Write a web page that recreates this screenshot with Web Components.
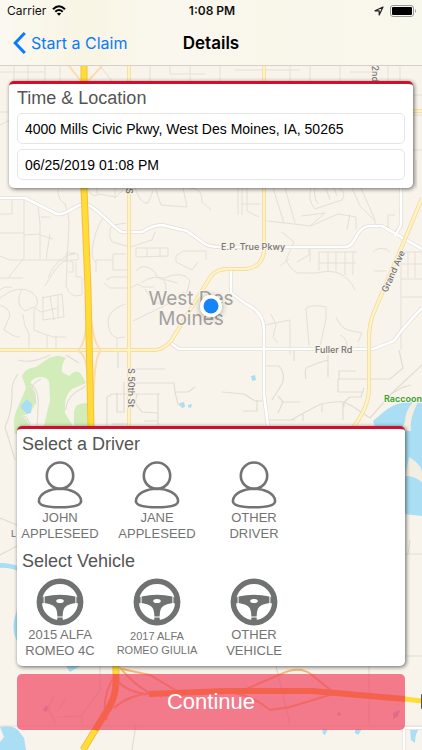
<!DOCTYPE html>
<html lang="en">
<head>
<meta charset="utf-8">
<meta name="viewport" content="width=device-width, initial-scale=1">
<title>Details</title>
<style>
    body {
        margin: 0;
        font-family: "Liberation Sans", Arial, sans-serif;
    }
</style>
</head>
<body>
<claim-details></claim-details>

<script>
class StatusBar extends HTMLElement {
    constructor() {
        super();
        this.attachShadow({ mode: 'open' });
    }

    connectedCallback() {
        this.shadowRoot.innerHTML = `
            <style>
                :host {
                    display: grid;
                    grid-template-columns: 1fr auto 1fr;
                    align-items: center;
                    height: 21px;
                    padding: 0 5px 0 7px;
                    font: 12px/20px Inter, sans-serif;
                    color: #111;
                }

                div {
                    display: flex;
                    align-items: center;
                    gap: 6px;
                }

                .right {
                    justify-content: flex-end;
                }

                strong {
                    font-weight: 600;
                }

                svg {
                    display: block;
                }
            </style>
            <div>
                <span>Carrier</span>
                <svg width="14" height="11" viewBox="0 0 14 11" fill="none" stroke="#000" stroke-width="2">
                    <path d="M1 4.2Q7-1.6 13 4.2M3.3 6.7Q7 3.2 10.7 6.7"/>
                    <path d="M7 10.8L4.8 8.6Q7 6.8 9.2 8.6z" fill="#000" stroke="none"/>
                </svg>
            </div>
            <strong>1:08 PM</strong>
            <div class="right">
                <svg width="10" height="10" viewBox="0 0 10 10" fill="none" stroke="#222" stroke-width="1.2" stroke-linejoin="round">
                    <path d="M9 1L1 4.8H5.2V9z"/>
                </svg>
                <svg width="27" height="12" viewBox="0 0 27 12">
                    <rect x=".5" y=".5" width="23" height="11" rx="2.5" fill="none" stroke="#999"/>
                    <rect x="2" y="2" width="20" height="8" rx="1" fill="#000"/>
                    <path d="M25 4Q27 6 25 8z" fill="#999"/>
                </svg>
            </div>
        `;
    }
}

class NavBar extends HTMLElement {
    constructor() {
        super();
        this.attachShadow({ mode: 'open' });
    }

    connectedCallback() {
        this.shadowRoot.innerHTML = `
            <style>
                :host {
                    display: grid;
                    grid-template-columns: 1fr auto 1fr;
                    align-items: center;
                    height: 44px;
                    padding: 0 13px;
                    border-bottom: 1px solid #d5d1ca;
                    font: 16px/22px Inter, sans-serif;
                }

                a {
                    display: flex;
                    align-items: center;
                    gap: 5px;
                    color: #0a7aff;
                    text-decoration: none;
                }

                h1 {
                    margin: 0;
                    font-size: 17px;
                    font-weight: 600;
                    color: #000;
                }
            </style>
            <a href="#start">
                <svg width="13" height="22" viewBox="0 0 13 22" fill="none" stroke="currentColor" stroke-width="3">
                    <path d="M11.8 1L2.2 11l9.6 10"/>
                </svg>
                <slot name="back"></slot>
            </a>
            <h1><slot></slot></h1>
        `;
    }
}

class AreaMap extends HTMLElement {
    constructor() {
        super();
        this.attachShadow({ mode: 'open' });
    }

    connectedCallback() {
        this.shadowRoot.innerHTML = `
            <style>
                :host {
                    display: block;
                    overflow: hidden;
                    background: #f8f4ec;
                }

                svg {
                    display: block;
                    width: 100%;
                    height: 100%;
                }

                .line {
                    fill: none;
                    stroke-linejoin: round;
                }

                .street { stroke: #e4dfd7; stroke-width: 1; }
                .path { stroke: #e2ddd3; stroke-width: 1.2; }
                .casing { stroke: #e2ddd6; stroke-width: 4; }
                .road { stroke: #fff; stroke-width: 2.6; }
                .main-casing { stroke: #f3d795; stroke-width: 4; }
                .main { stroke: #fdf3c4; stroke-width: 2.6; }
                .ramp { stroke: #fbdcae; stroke-width: 2; }
                .highway-casing { stroke: #f7bf3d; stroke-width: 7; }
                .highway { stroke: #ffdd36; stroke-width: 5; }
                .park { fill: #d2edba; }
                .water { fill: #a9def4; }

                text {
                    font-family: Inter, sans-serif;
                    font-size: 9px;
                    font-weight: 500;
                    fill: #77736f;
                    stroke: #f8f4ec;
                    stroke-width: 2;
                    paint-order: stroke;
                }

                .city {
                    font-size: 19px;
                    font-weight: 400;
                    fill: #a3a09d;
                }

                .nature {
                    fill: #3d9f2c;
                    font-weight: 600;
                }
            </style>
            <svg viewBox="0 0 422 750" preserveAspectRatio="xMidYMid slice" role="img" aria-label="Map of West Des Moines">
                <defs>
                    <filter id="shade" x="-50%" y="-50%" width="200%" height="200%">
                        <feDropShadow dx="0" dy="1" stdDeviation="3" flood-opacity=".35"/>
                    </filter>
                </defs>

                <path class="park" d="M22 376Q25 368 36 367L49 358Q60 354 65 358Q61 367 62 372L69 376Q77 368 81 374L86 383L72 389Q65 396 65 405V413L73 426L15 434Q12 420 17 409L26 388z"/>
                <path class="park" d="M76 406Q79 403 90 403V428H74V411zM52 359L57 356 66 358 62 363z"/>
                <path fill="#f8f4ec" d="M31 381Q42 373 49 381L50 400 44 426H29Q27 418 21 416Q31 415 36 402Q37 392 31 386z"/>
                <path class="water" fill="#8fd1ee" d="M21 405L27 399 32 404 31 413 27 414 21 408z"/>

                <path class="water" d="M373 421L386 410Q398 400 422 402V516L404 514z"/>
                <path fill="#f4eee2" d="M413 402Q405 411 405 422L401 430 411 431Q409 419 418 402zM409 457Q421 464 422 472V482Q413 475 405 476z"/>
                <path class="water" d="M0 563Q12 563 20 567V572Q9 567 0 568zM18 608Q9 628 18 643zM66 666H80L70 672zM0 727Q10 724 18 730L24 738 26 750H0V742L4 737z"/>
                <path class="water" d="M180 403l4-1 1 5-3 1-3-3zM188 405l4-1-1 4-3-1zM251 376l4-1 1 5-4 1zM322 729h6l-3 6-2-1zM355 729h7l-4 6-3-2zM410 729h9q-4 5-4 14l-4-3z"/>
                <path fill="#b8c4ef" d="M43 709l4-4 1 5-3 2zM337 715l2-4 2 5zM393 713l7-3-2 6-5 3z"/>

                <g class="line street">
                    <path d="M0 72H45M14 66V118L0 125M0 112H40M28 66V90M45 66V81M60 66V81M100 66L112 81M150 66V81M170 66V74H205M190 66V81M220 66V81M235 70H300M290 66V81M310 66V81M340 66V81M350 72H374M388 66V95M400 66V81M414 95H422M405 115H422M413 150H422M416 160V188"/>
                    <path d="M24 198V258L8 278M0 214H12V198M0 233H24M0 256L10 260H66L73 262V272H68M0 278H23M24 235L40 234V223L38 207M40 259V235L53 239M41 217H50M48 278Q55 258 75 253H66V262M70 254H78V260H70M45 286Q60 260 66 261M50 234L46 259M58 190Q58 200 65 204Q69 214 69 223L66 286Q70 299 82 295V277H76V262"/>
                    <path d="M0 290Q6 285 12 288M0 298Q19 283 33 293Q41 301 35 308M0 305Q9 308 10 315L4 330Q19 340 20 336M22 289Q14 304 25 311L33 307 41 312 57 308M23 314Q23 325 29 334L29 349M34 309V330Q44 335 54 337H66M42 298L62 294 64 317 43 320V296M50 296L54 320M58 295V318M47 336V349M56 336V349"/>
                    <path d="M88 188Q91 199 100 194L115 197M97 188V194M115 188V198L123 190M135 188Q141 205 148 203L153 191M156 190L161 205 187 207 183 188M190 188Q203 188 202 202L211 210M103 218Q94 231 92 252Q92 260 96 262M96 260H113V254H126M113 260V270H129M96 260V272M110 229L113 225 126 223M109 235L112 242 130 247 152 240 155 232M110 235V229M136 257V248H168V256L137 257M147 249V257M160 249V257M176 256L183 251H206V260M176 256V262L192 270 198 262"/>
                    <path d="M106 280L112 277H128M104 283L110 288H131L137 284 143 287H154M136 271Q143 262 154 271L158 278 178 283M141 283Q152 275 163 278Q170 291 162 303H154L145 289M164 278Q184 270 190 281L187 292 170 302M184 292L169 303M125 304Q109 310 108 320Q108 335 117 338L125 337M117 338V349M133 321L170 303"/>
                    <path d="M242 188V215M238 188V215M273 188L284 223M285 188L295 223M311 188Q307 199 315 209L342 200Q347 192 339 188M315 188Q313 196 318 204M326 188L330 200M334 188L337 196M361 188L375 220V228M352 188L360 206 375 221M268 221L311 226 338 214 356 217V230M301 216L309 215 325 213 310 226M350 214L347 230M247 188V211L259 217M241 204H260"/>
                    <path d="M282 232L294 242 286 260Q291 270 297 273H317Q344 266 355 290M280 266L289 259M309 248V255L297 262M319 252V271M328 252V271M336 252V271M345 252V275M353 252V275M319 263H356M319 252H357M310 247V262M373 252Q378 247 386 249L390 252M374 271H386M388 231V215H395M401 252V350M408 252V278M415 252V278M401 252H422M401 264H422M401 279H422M401 297H422"/>
                    <path d="M265 325L290 320V355M271 314L276 325 273 337 278 343M309 346L306 308Q313 304 326 307V319L320 346M336 317Q341 328 348 330L362 333 358 342M340 335Q348 338 347 350"/>
                </g>

                <g class="line path">
                    <path d="M18 360Q32 364 50 355M18 374Q11 383 12 394Q12 412 5 427L15 460M41 379Q31 383 31 393L36 404M66 410Q66 396 83 388L85 386M21 430Q21 414 26 417Q33 426 27 430M66 355L79 363M37 429L38 407Q40 392 31 384"/>
                    <path d="M118 350V368M107 426V397L112 394H130M117 393V412H124V382M112 424H128M129 369H165M131 383H174L175 392H188L195 387M175 392L178 404 182 407M133 394H160M137 394L135 403 142 412 158 413M158 394V425M144 421H158"/>
                    <path d="M265 366H279Q286 375 282 384L272 400M265 401H255L244 394 222 392M257 400V411H243M278 396L283 402 278 413M283 402H300M306 379Q304 368 308 367L318 363 328 360M328 355V377M294 361V350M267 420H295M291 420Q309 410 321 404Q337 401 344 402V407M322 404V412M303 414V421M356 371H339V379H372M338 379V392H362M364 388L361 397H350L344 402 352 406 370 418M343 403V420M370 418L392 393 422 365M372 379H390L403 368 399 350M391 394L405 386M401 388L411 385"/>
                    <path d="M406 554H422M406 656H422M0 518L17 525M100 666V690L82 715V724M0 726H422M136 724L132 750M276 666L290 724M369 666V724M53 697L48 709 56 724M65 699L59 709M82 716L57 717M410 540L408 554M0 555L17 546"/>
                </g>

                <g class="line">
                    <path class="casing" d="M0 198H25Q47 209 57 214C67 216 76 203 86 204C96 206 115 230 122 232H142Q153 225 162 225L187 231 205 244Q210 247 221 247H345C357 247 354 227 370 226H382L422 249M231 270V293L246 304Q264 312 264 330V395L268 426M169 342L179 349H373L394 341Q401 330 422 308M401 188V225L395 236M404 750V728H422"/>
                    <path class="road" d="M0 198H25Q47 209 57 214C67 216 76 203 86 204C96 206 115 230 122 232H142Q153 225 162 225L187 231 205 244Q210 247 221 247H345C357 247 354 227 370 226H382L422 249M231 270V293L246 304Q264 312 264 330V395L268 426M169 342L179 349H373L394 341Q401 330 422 308M401 188V225L395 236M404 750V728H422"/>
                    <path class="main-casing" d="M0 350H154Q163 350 171 341L211 276Q217 269 227 269H246Q263 267 264 250V66M129 66V428M422 198L405 239 374 312Q369 323 369 340V386Q370 405 353 428M388 111H422"/>
                    <path class="main" d="M0 350H154Q163 350 171 341L211 276Q217 269 227 269H246Q263 267 264 250V66M129 66V428M422 198L405 239 374 312Q369 323 369 340V386Q370 405 353 428M388 111H422"/>
                </g>

                <g class="line ramp">
                    <path d="M69 66L81 81M102 66L88 81M88 310Q86 344 78 350M90 310Q93 344 101 350M78 351Q88 354 88 389M101 351Q93 355 93 426"/>
                    <path stroke="#f8b774" d="M120 668Q140 690 153 694H182L150 675 122 669M116 680Q130 694 150 694M114 708Q130 694 150 694L225 692Q250 693 270 710L290 707 333 694M244 690L281 674Q300 665 312 675L333 692M107 720Q100 699 115 675"/>
                </g>
                <g class="line">
                    <path class="highway-casing" d="M84 66V188L88 290 91 428 116 666V681Q116 699 105 714L83 750"/>
                    <path class="highway" d="M84 66V188L88 290 91 428 116 666V681Q116 699 105 714L83 750"/>
                    <path stroke="#ffa01f" stroke-width="6" d="M149 694L225 691H312L405 699"/>
                    <path stroke="#ffa01f" stroke-width="6" d="M116 674V681Q116 699 105 714L95 730"/>
                    <path class="highway" d="M405 699L422 701"/>
                </g>
                <rect x="421" y="694" width="12" height="15" rx="1" fill="#555"/>

                <text x="221" y="250">E.P. True Pkwy</text>
                <text x="315" y="353">Fuller Rd</text>
                <text transform="translate(387 293) rotate(-66)">Grand Ave</text>
                <text transform="translate(128 368) rotate(90)">S 50th St</text>
                <text transform="translate(372 60) rotate(90)">22nd</text>
                <text transform="translate(126 188) rotate(90)">S</text>
                <text x="11" y="537">L</text>
                <text class="nature" x="384" y="402">Raccoon</text>
                <text class="city" x="191" y="305" text-anchor="middle">West Des</text>
                <text class="city" x="191" y="325" text-anchor="middle">Moines</text>
                <circle cx="211" cy="306" r="11" fill="#fff" filter="url(#shade)"/>
                <circle cx="211" cy="306" r="7.5" fill="#1783fb"/>
            </svg>
        `;
    }
}

class ClaimCard extends HTMLElement {
    constructor() {
        super();
        this.attachShadow({ mode: 'open' });
    }

    connectedCallback() {
        this.shadowRoot.innerHTML = `
            <style>
                :host {
                    display: block;
                    border-top: 3px solid #cf102d;
                    border-radius: 5px;
                    background: #fff;
                    box-shadow: 1px 1px 4px rgb(0 0 0 / 0.6);
                }
            </style>
            <slot></slot>
        `;
    }
}

class ClaimField extends HTMLElement {
    constructor() {
        super();
        this.attachShadow({ mode: 'open' });
    }

    connectedCallback() {
        const label = this.getAttribute('label') || '';
        const value = this.getAttribute('value') || '';

        this.shadowRoot.innerHTML = `
            <style>
                :host {
                    display: block;
                }

                input {
                    display: block;
                    box-sizing: border-box;
                    width: 100%;
                    height: 31px;
                    margin: 0;
                    padding: 0 7px;
                    border: 1px solid #e6e6e6;
                    border-radius: 5px;
                    background: #fff;
                    color: #000;
                    font: 14px "Liberation Sans", Arial, sans-serif;
                }
            </style>
            <input type="text" aria-label="${label}" value="${value}">
        `;
    }
}

const ICONS = {
    person: `
        <g fill="none" stroke="#737373" stroke-width="2.6">
            <circle cx="24" cy="14.7" r="13.2"/>
            <path d="M2.9 40C3.2 33 13 27.7 24 27.7S44.8 33 45.1 40Q45.1 46.3 24 46.3T2.9 40z"/>
        </g>`,
    wheel: `
        <circle cx="24" cy="24" r="20.7" fill="none" stroke="#707271" stroke-width="5.4"/>
        <path fill="#707271" fill-rule="evenodd" d="M8.6 18.6Q24 14.8 39.4 18.6V25L34 26.3Q27.4 28.5 27 34L26.6 38.6H21.4L21 34Q20.6 28.5 14 26.3L8.6 25zM20.2 23A3.8 2.1 0 0 0 27.8 23A3.8 2.1 0 0 0 20.2 23zM6 19.5L7.6 18.8V25.2H6zM40.4 18.8L42 19.5V25.2H40.4zM21.4 39.6H26.6L27 43H21z"/>`
};

class ClaimChoice extends HTMLElement {
    constructor() {
        super();
        this.attachShadow({ mode: 'open' });
    }

    connectedCallback() {
        const icon = ICONS[this.getAttribute('icon')] || '';

        this.shadowRoot.innerHTML = `
            <style>
                :host {
                    display: block;
                }

                button {
                    display: flex;
                    flex-direction: column;
                    align-items: center;
                    gap: 1px;
                    width: 100%;
                    padding: 0;
                    border: 0;
                    background: none;
                    color: #737373;
                    font: 13px/16px "Liberation Sans", Arial, sans-serif;
                    cursor: pointer;
                }

                span {
                    display: flex;
                    flex-direction: column;
                    justify-content: center;
                    min-height: 32px;
                    white-space: nowrap;
                }

                :host([compact]) span {
                    font-size: 11px;
                    line-height: 14px;
                }
            </style>
            <button type="button">
                <svg width="48" height="48" viewBox="0 0 48 48" aria-hidden="true">${icon}</svg>
                <span><slot></slot></span>
            </button>
        `;
    }
}

class ContinueButton extends HTMLElement {
    constructor() {
        super();
        this.attachShadow({ mode: 'open' });
    }

    connectedCallback() {
        this.shadowRoot.innerHTML = `
            <style>
                :host {
                    display: block;
                }

                button {
                    display: block;
                    width: 100%;
                    height: 56px;
                    border: 0;
                    border-radius: 5px;
                    background: rgb(239 70 97 / 0.7);
                    color: #fff;
                    font: 22px "Liberation Sans", Arial, sans-serif;
                    cursor: pointer;
                }
            </style>
            <button type="button"><slot></slot></button>
        `;
    }
}

class ClaimDetails extends HTMLElement {
    constructor() {
        super();
        this.attachShadow({ mode: 'open' });
    }

    connectedCallback() {
        this.shadowRoot.innerHTML = `
            <style>
                :host {
                    display: flex;
                    flex-direction: column;
                    position: relative;
                    min-height: 100vh;
                }

                area-map {
                    position: absolute;
                    inset: 0;
                }

                header {
                    position: relative;
                    background: linear-gradient(90deg, #faf8f0, #f9f5e4 20%, #faf7ef 40%, #f9f6ea 62%, #f9f8ed);
                }

                main {
                    position: relative;
                    flex: 1;
                    display: flex;
                    flex-direction: column;
                    justify-content: space-between;
                    padding: 15px 9px 20px;
                }

                .location {
                    display: grid;
                    gap: 5px;
                    padding: 4px 8px 8px;
                }

                .bottom {
                    display: grid;
                    gap: 8px;
                    padding: 0 8px;
                }

                .choices {
                    display: grid;
                    gap: 7px;
                    padding: 5px 0;
                }

                .row {
                    display: grid;
                    grid-template-columns: repeat(4, 1fr);
                    gap: 11px;
                    padding-right: 11px;
                    margin-bottom: 2px;
                }

                h2 {
                    margin: 0;
                    font-size: 18px;
                    line-height: 20px;
                    font-weight: 400;
                    color: #555;
                }

                .choices h2 {
                    padding-left: 5px;
                }
            </style>
            <area-map></area-map>
            <header>
                <status-bar></status-bar>
                <nav-bar><span slot="back">Start a Claim</span>Details</nav-bar>
            </header>
            <main>
                <claim-card>
                    <div class="location">
                        <h2>Time &amp; Location</h2>
                        <claim-field label="Location" value="4000 Mills Civic Pkwy, West Des Moines, IA, 50265"></claim-field>
                        <claim-field label="Time" value="06/25/2019 01:08 PM"></claim-field>
                    </div>
                </claim-card>
                <div class="bottom">
                    <claim-card>
                        <div class="choices">
                            <h2>Select a Driver</h2>
                            <div class="row">
                                <claim-choice icon="person"><div>JOHN</div><div>APPLESEED</div></claim-choice>
                                <claim-choice icon="person"><div>JANE</div><div>APPLESEED</div></claim-choice>
                                <claim-choice icon="person"><div>OTHER</div><div>DRIVER</div></claim-choice>
                            </div>
                            <h2>Select Vehicle</h2>
                            <div class="row">
                                <claim-choice icon="wheel"><div>2015 ALFA</div><div>ROMEO 4C</div></claim-choice>
                                <claim-choice icon="wheel" compact><div>2017 ALFA</div><div>ROMEO GIULIA</div></claim-choice>
                                <claim-choice icon="wheel"><div>OTHER</div><div>VEHICLE</div></claim-choice>
                            </div>
                        </div>
                    </claim-card>
                    <continue-button>Continue</continue-button>
                </div>
            </main>
        `;
    }
}

customElements.define('status-bar', StatusBar);
customElements.define('nav-bar', NavBar);
customElements.define('area-map', AreaMap);
customElements.define('claim-card', ClaimCard);
customElements.define('claim-field', ClaimField);
customElements.define('claim-choice', ClaimChoice);
customElements.define('continue-button', ContinueButton);
customElements.define('claim-details', ClaimDetails);
</script>
</body>
</html>
